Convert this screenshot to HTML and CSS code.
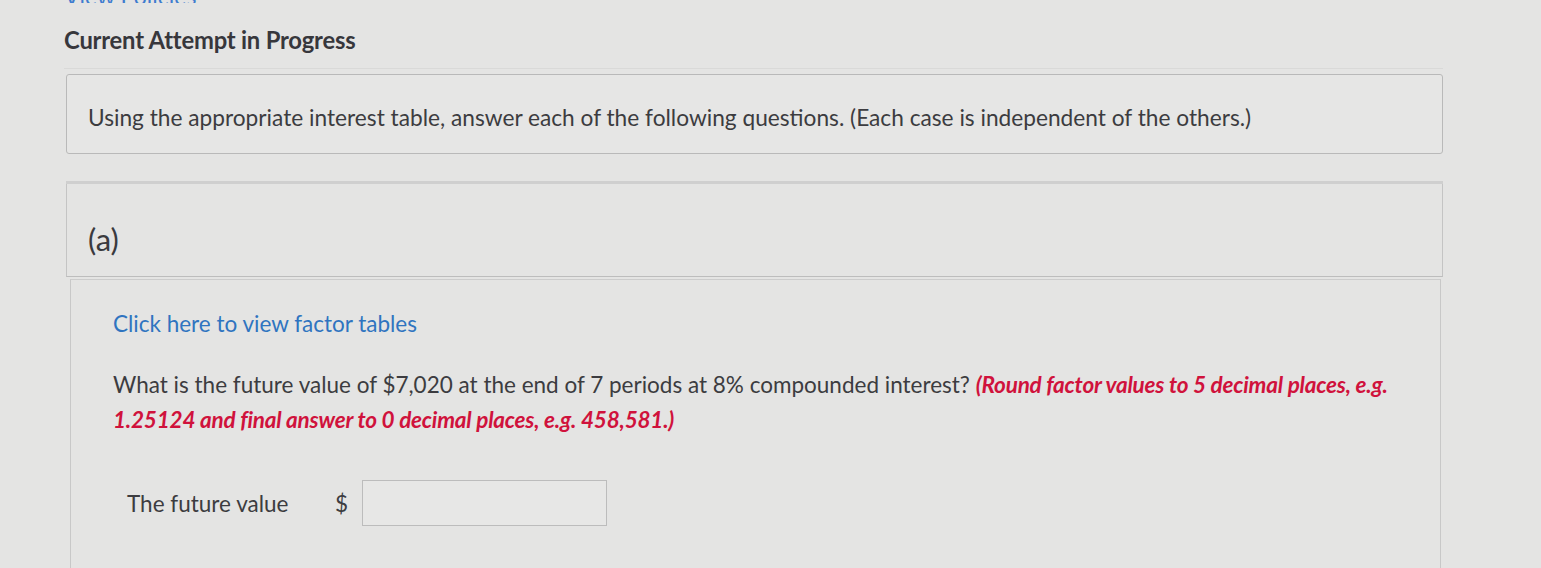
FILE: index.html
```html
<!DOCTYPE html>
<html>
<head>
<meta charset="utf-8">
<link rel="stylesheet" href="styles.css">
</head>
<body>
<div class="page">
  <a class="policies">View Policies</a>
  <h1 class="title">Current Attempt in Progress</h1>
  <div class="sep"></div>
  <div class="intro">Using the appropriate interest table, answer each of the following questions. (Each case is independent of the others.)</div>
  <div class="part">
    <div class="part-head">(a)</div>
    <div class="part-body">
      <a class="tables">Click here to view factor tables</a>
      <p class="question">What is the future value of $7,020 at the end of 7 periods at 8% compounded interest? <em class="hint">(Round factor values to 5 decimal places, e.g. 1.25124 and final answer to 0 decimal places, e.g. 458,581.)</em></p>
      <div class="answer">
        <span class="label">The future value</span>
        <span class="dollar">$</span>
        <span class="input"></span>
      </div>
    </div>
  </div>
</div>
</body>
</html>
```
FILE: styles.css
```css
html, body {
  margin: 0;
  padding: 0;
  background: #e4e4e3;
  font-family: Lato, "Open Sans", sans-serif;
  color: #3c3c40;
  overflow: hidden;
}
.page {
  padding: 0 98px 0 64px;
  height: 568px;
  box-sizing: border-box;
  overflow: hidden;
}
.policies {
  display: block;
  color: #3f7ccf;
  font-size: 23px;
  line-height: 22px;
  margin-top: -15px;
  height: 18px;
  overflow: hidden;
}
.title {
  margin: 23px 0 0 0;
  font-size: 23.8px;
  line-height: 28px;
  font-weight: 700;
  color: #37373c;
  letter-spacing: -0.2px;
}
.sep {
  height: 1px;
  background: #d9d9d8;
  margin: 14px 0 0 0;
}
.intro {
  margin: 5px 0 0 2px;
  border: 1px solid #b9b9b9;
  border-radius: 3px;
  padding: 29px 20px 21px 21px;
  font-size: 22.7px;
  line-height: 28px;
  background: #e6e6e5;
}
.part {
  margin: 27px 0 0 2px;
  border-top: 3px solid #cfcfcf;
}
.part-head {
  border-left: 1px solid #c4c4c4;
  border-right: 1px solid #c4c4c4;
  border-bottom: 1px solid #bdbdbd;
  padding: 37px 20px 19px 21px;
  font-size: 31px;
  line-height: 36px;
  color: #3a3a3e;
}
.part-body {
  margin: 2px 2px 0 4px;
  border-left: 1px solid #c8c8c8;
  border-right: 1px solid #c8c8c8;
  border-top: 1px solid #cccccc;
  padding: 30px 40px 40px 42px;
  height: 300px;
}
.tables {
  display: block;
  color: #2f74c0;
  font-size: 22.5px;
  line-height: 28px;
}
.question {
  margin: 29px 0 0 0;
  font-size: 22.5px;
  line-height: 35px;
}
.hint {
  color: #d0123c;
  font-weight: 700;
  font-style: italic;
  letter-spacing: -0.2px;
}
.answer {
  margin-top: 43px;
  display: flex;
  align-items: center;
  padding-left: 14px;
}
.label {
  font-size: 22.5px;
  width: 208px;
}
.dollar {
  font-size: 22.5px;
  width: 27px;
}
.input {
  display: block;
  width: 243px;
  height: 44px;
  border: 1px solid #bcbcbc;
  background: #e7e7e6;
}
```
